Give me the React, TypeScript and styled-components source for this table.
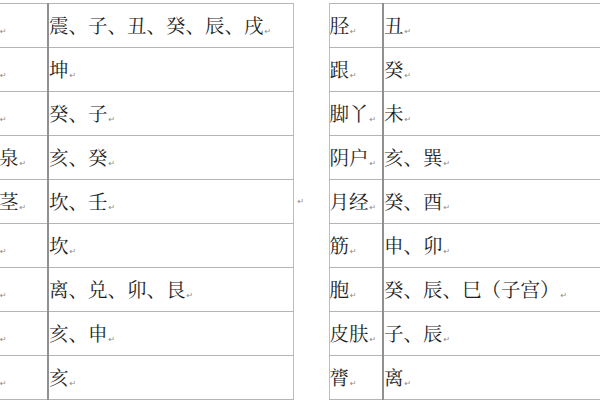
import React from "react";
import styled, { createGlobalStyle } from "styled-components";

const Global = createGlobalStyle`
  html, body { margin: 0; padding: 0; background: #ffffff; overflow: hidden; }
  body { width: 600px; height: 400px; }
`;

const Page = styled.div`
  display: flex;
  align-items: flex-start;
  margin-left: -48px;
  padding-top: 3px;
  width: 720px;
  font-family: "Noto Serif CJK SC", "Noto Sans CJK SC", serif;
  color: #1e1e1e;
`;

const Table = styled.table<{ $first: number; $second: number }>`
  border-collapse: collapse;
  table-layout: fixed;
  width: ${(p) => p.$first + p.$second}px;
  flex: none;
  col:first-child { width: ${(p) => p.$first}px; }
  col:last-child { width: ${(p) => p.$second}px; }
`;

const Row = styled.tr`
  height: 44px;
`;

const Cell = styled.td<{ $divider?: boolean; $pad: number; $outer?: boolean }>`
  border-top: 1px solid #b4b4b4;
  border-bottom: 1px solid #b4b4b4;
  border-left: ${(p) => (p.$outer ? "1px solid #bdbdbd" : "none")};
  border-right: ${(p) => (p.$divider ? "2px solid #909090" : "1px solid #bdbdbd")};
  padding: 5px 0 0 ${(p) => p.$pad}px;
  font-size: 19.5px;
  line-height: 24px;
  white-space: nowrap;
  overflow: hidden;
  vertical-align: middle;
`;

const Mark = styled.span`
  font-family: "DejaVu Sans", sans-serif;
  font-size: 8px;
  color: #8a8a8a;
  margin-left: 1px;
  vertical-align: -1px;
`;

const Gap = styled.div`
  width: 35px;
  height: 396px;
  flex: none;
  display: flex;
  align-items: center;
  padding-left: 3px;
  box-sizing: border-box;
`;

const leftRows: [string, string][] = [
  ["四肢", "震、子、丑、癸、辰、戌"],
  ["腹部", "坤"],
  ["肾脏", "癸、子"],
  ["足涌泉", "亥、癸"],
  ["男阴茎", "坎、壬"],
  ["耳朵", "坎"],
  ["眼睛", "离、兑、卯、艮"],
  ["血液", "亥、申"],
  ["唾液", "亥"],
];

const rightRows: [string, string][] = [
  ["胫", "丑"],
  ["跟", "癸"],
  ["脚丫", "未"],
  ["阴户", "亥、巽"],
  ["月经", "癸、酉"],
  ["筋", "申、卯"],
  ["胞", "癸、辰、巳（子宫）"],
  ["皮肤", "子、辰"],
  ["膂", "离"],
];

const P = () => <Mark>↵</Mark>;

export default function App() {
  return (
    <>
      <Global />
      <Page>
        <Table $first={96} $second={245}>
          <colgroup>
            <col />
            <col />
          </colgroup>
          <tbody>
            {leftRows.map(([a, b]) => (
              <Row key={a}>
                <Cell $pad={8} $divider>
                  {a}
                  <P />
                </Cell>
                <Cell $pad={0}>
                  {b}
                  <P />
                </Cell>
              </Row>
            ))}
          </tbody>
        </Table>
        <Gap>
          <P />
        </Gap>
        <Table $first={54} $second={300}>
          <colgroup>
            <col />
            <col />
          </colgroup>
          <tbody>
            {rightRows.map(([a, b]) => (
              <Row key={a}>
                <Cell $pad={0} $divider $outer>
                  {a}
                  <P />
                </Cell>
                <Cell $pad={0}>
                  {b}
                  <P />
                </Cell>
              </Row>
            ))}
          </tbody>
        </Table>
      </Page>
    </>
  );
}
